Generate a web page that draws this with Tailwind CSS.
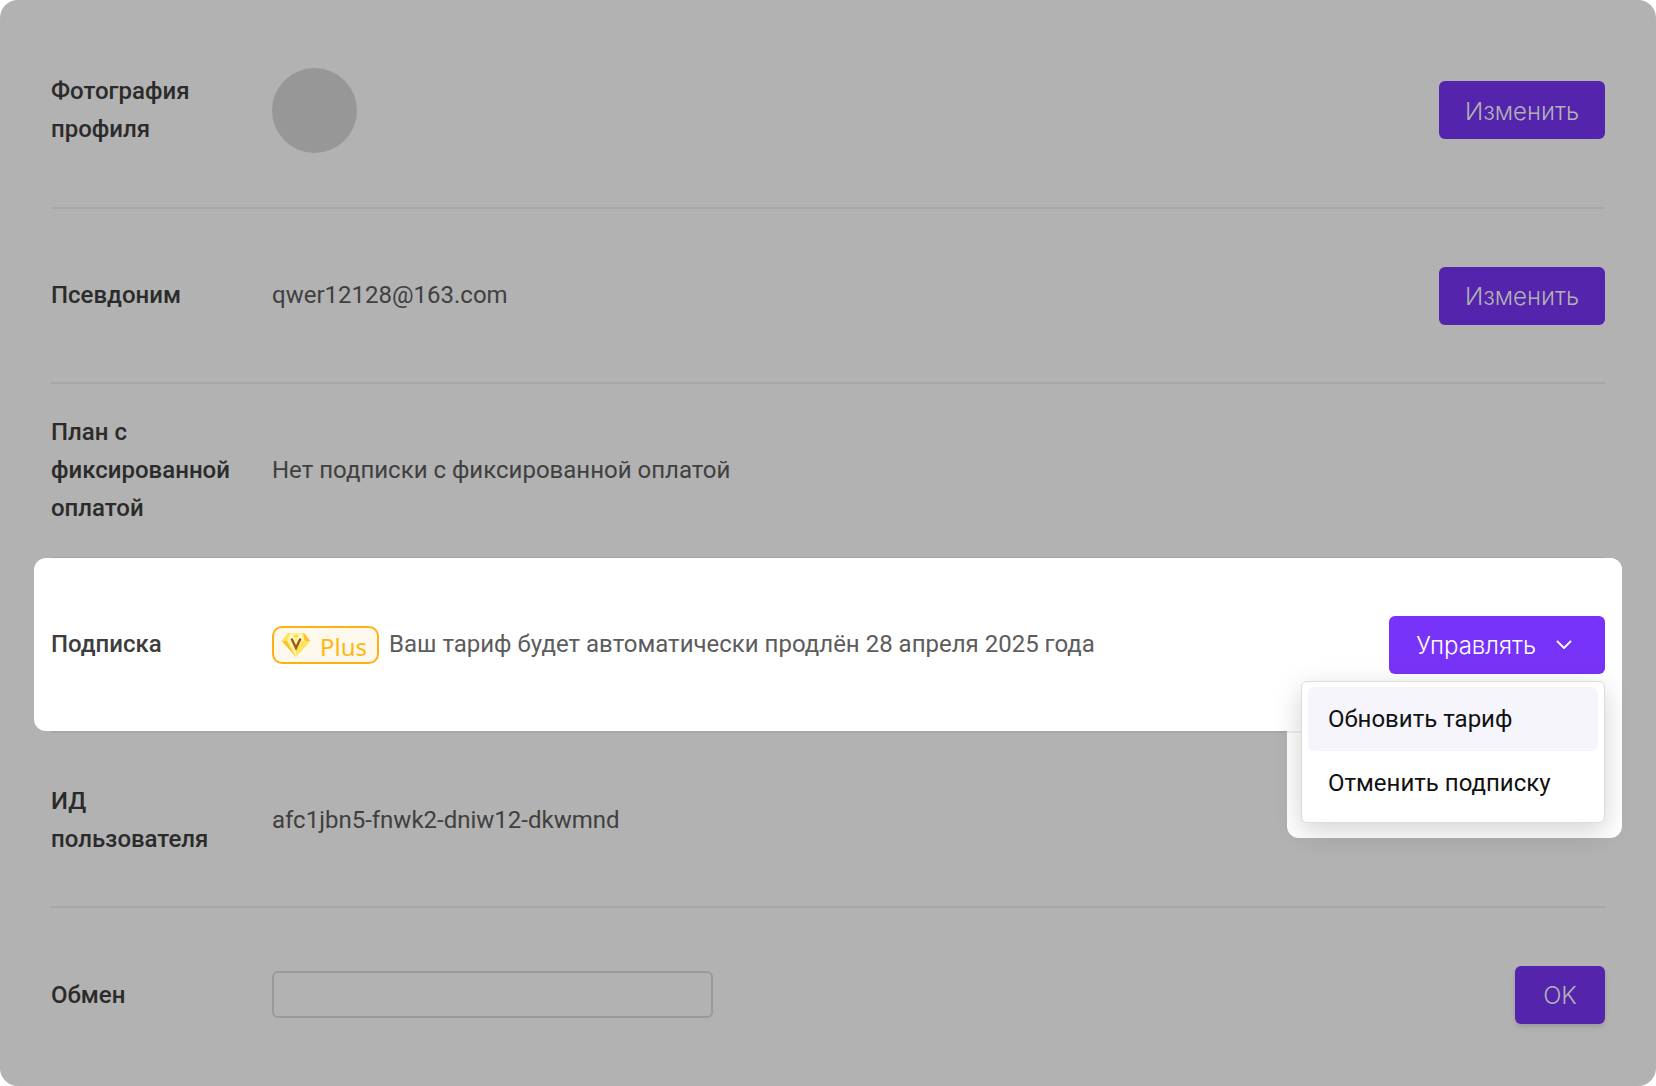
<!DOCTYPE html>
<html lang="ru">
    <head>
        <meta charset="UTF-8">
        <meta name="viewport" content="width=device-width, initial-scale=1.0">
        <title>Профиль</title>
        <script src="https://cdn.jsdelivr.net/npm/@tailwindcss/browser@4"></script>
    </head>
    <body class="bg-white font-['Roboto',sans-serif] text-2xl text-[#404040]">
        <main class="min-h-screen rounded-[18px] bg-[#b2b2b2] px-[51px] pt-[13px]">

            <!-- Фотография -->
            <section class="flex h-[196px] items-center border-b-2 border-[#a8a8a8]">
                <h2 class="mr-[41px] w-[180px] shrink-0 font-medium leading-[38px] text-[#2b2b2b]">Фотография профиля</h2>
                <div class="size-[85px] rounded-full bg-[#979797]"></div>
                <button type="button" class="ml-auto h-[58px] rounded-md bg-[#5424ad] px-[26px] pt-[3px] font-['Inter',sans-serif] font-light text-[#b2b2b2]">Изменить</button>
            </section>

            <!-- Псевдоним -->
            <section class="flex h-[175px] items-center border-b-2 border-[#a6a6ab]">
                <h2 class="mr-[41px] w-[180px] shrink-0 pb-[2px] font-medium leading-[38px] text-[#2b2b2b]">Псевдоним</h2>
                <p class="pb-[2px]">qwer12128@163.com</p>
                <button type="button" class="ml-auto h-[58px] rounded-md bg-[#5424ad] px-[26px] pt-[3px] font-['Inter',sans-serif] font-light text-[#b2b2b2]">Изменить</button>
            </section>

            <!-- План -->
            <section class="flex h-[174px] items-center border-b border-[#a6a6ab]">
                <h2 class="mr-[41px] w-[180px] shrink-0 pb-[2px] font-medium leading-[38px] text-[#2b2b2b]">План с фиксированной оплатой</h2>
                <p class="pb-[2px]">Нет подписки с фиксированной оплатой</p>
            </section>

            <!-- Подписка: выделенная строка с открытым меню -->
            <section class="relative z-10 flex h-[175px] items-center border-b-2 border-[#a6a6ab]">
                <div class="absolute -inset-x-[17px] inset-y-0 rounded-xl bg-white"></div>
                <div class="absolute -right-[17px] top-0 h-[280px] w-[335px] rounded-xl bg-white pr-[17px] pt-[173px]">
                    <div class="h-[2px] bg-[#eeeef4]"></div>
                </div>
                <h2 class="relative mr-[41px] w-[180px] shrink-0 pb-[2px] font-medium leading-[38px] text-[#3d3d3d]">Подписка</h2>
                <div class="relative flex h-[38px] w-[107px] items-center rounded-[10px] border-2 border-[#ffb012] bg-[#fff9ed] pl-2 text-[#ffb612]">
                    <svg class="mr-[10px] h-6 w-7" viewBox="0 0 28 24">
                        <path fill="#ffd92e" d="M6 0h16l6 8-14 16L0 8z"/>
                        <path fill="#ffbf2b" d="M0 8h6l8 16zM22 0l6 8h-6z"/>
                        <path fill="#ffe45c" d="M6 0l3 8H0zM22 8h6L14 24z"/>
                        <path fill="#fff3a0" d="M8 0h12l3 8-9 16L5 8z"/>
                        <path fill="#fffbd6" d="M8 1l6 4-6 3zM20 1l-6 4 6 3z"/>
                        <path fill="#ffe14d" d="M14 0l3 3-3 3-3-3zM20 8h3l-9 14v-5z"/>
                        <path fill="none" stroke="#9a5a1c" stroke-width="2.4" d="M9.500 5.500L14 15l4.500-9.500"/>
                    </svg>
                    <span class="pt-1 font-['Noto_Sans',sans-serif]">Plus</span>
                </div>
                <p class="relative ml-[10px] pb-[2px] text-[#5c5c5c]">Ваш тариф будет автоматически продлён 28 апреля 2025 года</p>
                <div class="relative ml-auto">
                    <button type="button" aria-haspopup="menu" aria-expanded="true" class="flex h-[58px] items-center gap-5 rounded-md bg-[#7833f8] pl-[27px] pr-[33px] pt-[3px] font-['Inter',sans-serif] font-light text-white">
                        Управлять
                        <svg class="h-4 w-4" viewBox="0 0 16 16" fill="none" stroke="currentColor" stroke-width="1.800">
                            <path stroke-linecap="round" stroke-linejoin="round" d="M1.500 3.500L8 10l6.500-6.500"/>
                        </svg>
                    </button>
                    <div role="menu" class="absolute right-0 top-full mt-[7px] w-[304px] rounded-md border border-[#dcdcdc] bg-white px-[6px] pb-[7px] pt-[5px] text-[#111111] shadow-[0_8px_28px_rgba(0,0,0,0.18)]">
                        <button type="button" role="menuitem" class="block h-16 w-full rounded-md bg-[#f6f5fb] px-5 text-left">Обновить тариф</button>
                        <button type="button" role="menuitem" class="block h-16 w-full rounded-md px-5 text-left">Отменить подписку</button>
                    </div>
                </div>
            </section>

            <!-- ИД -->
            <section class="flex h-[175px] items-center border-b-2 border-[#a6a6ab]">
                <h2 class="mr-[41px] w-[180px] shrink-0 font-medium leading-[38px] text-[#2b2b2b]">ИД пользователя</h2>
                <p>afc1jbn5-fnwk2-dniw12-dkwmnd</p>
            </section>

            <!-- Обмен -->
            <form class="flex h-[173px] items-center">
                <label for="obmen" class="mr-[41px] w-[180px] shrink-0 font-medium leading-[38px] text-[#2b2b2b]">Обмен</label>
                <input id="obmen" type="text" class="h-[47px] w-[441px] rounded-md border-2 border-[#9a9a9a] px-3">
                <button type="button" class="ml-auto h-[58px] w-[90px] rounded-md bg-[#5424ad] pt-[3px] font-['Inter',sans-serif] font-light text-[#b2b2b2] shadow-md">OK</button>
            </form>
        </main>
    </body>
</html>
